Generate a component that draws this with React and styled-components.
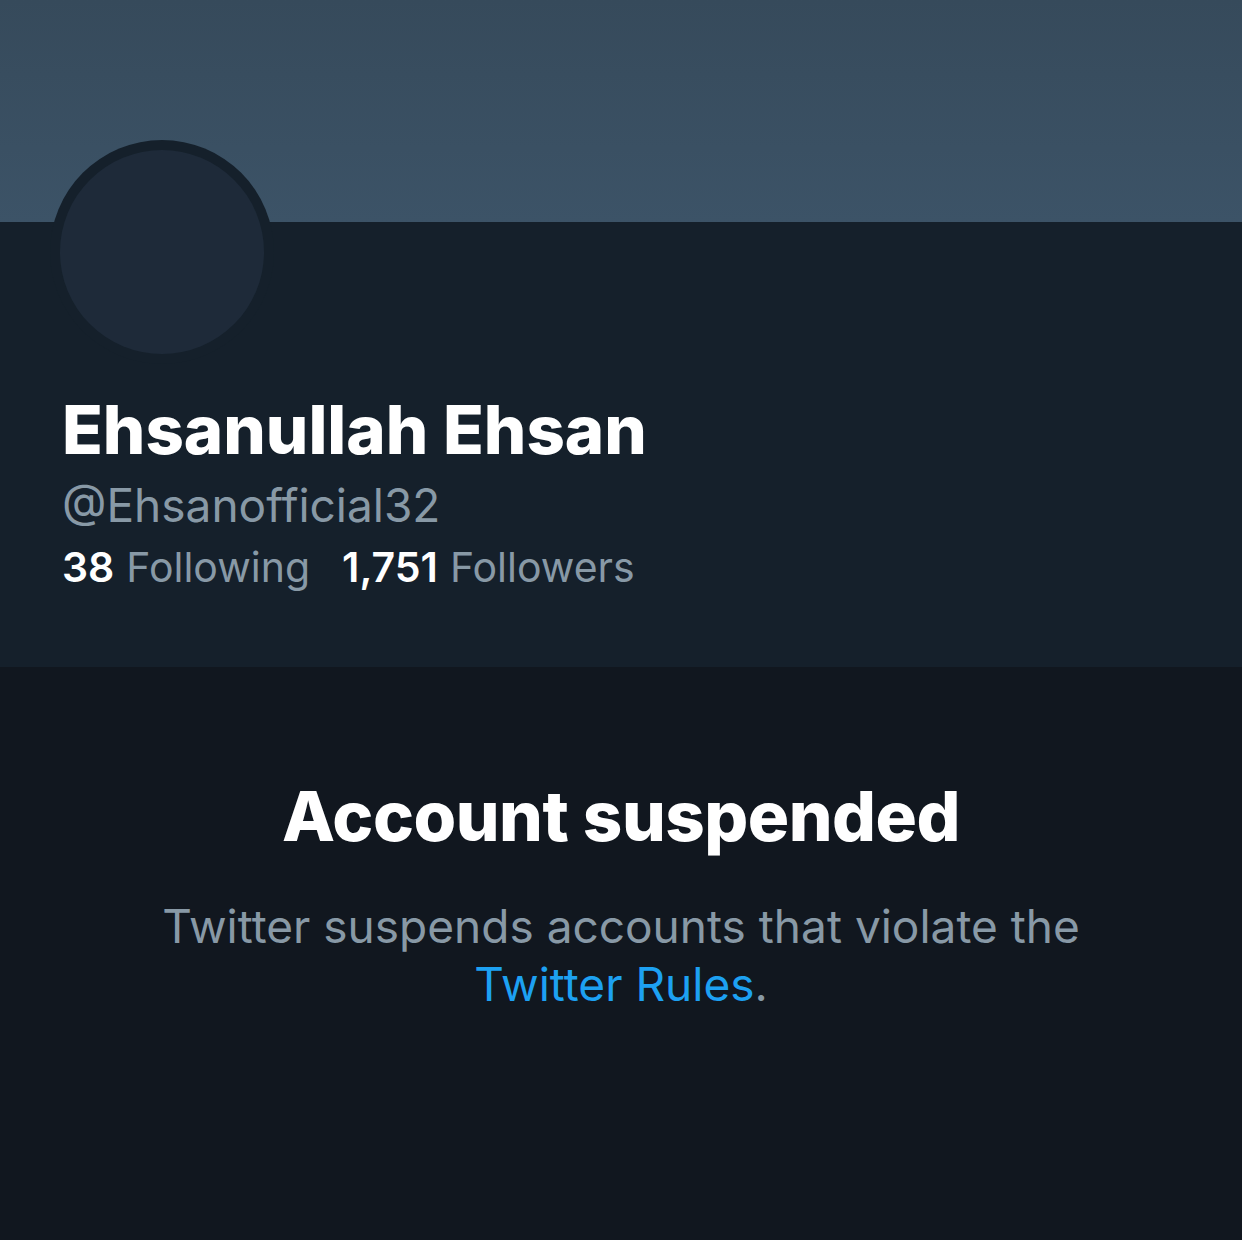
import React from "react";
import styled, { createGlobalStyle } from "styled-components";

const GlobalStyle = createGlobalStyle`
  html, body {
    margin: 0;
    padding: 0;
    background: #11171f;
  }
  body {
    font-family: Inter, "Noto Sans", "Liberation Sans", sans-serif;
    -webkit-font-smoothing: antialiased;
  }
`;

const Page = styled.div`
  width: 1242px;
  height: 1240px;
  background: #11171f;
  display: flex;
  flex-direction: column;
  overflow: hidden;
`;

const Banner = styled.div`
  height: 222px;
  background: linear-gradient(180deg, #364a5b 0%, #3c5367 100%);
  flex-shrink: 0;
`;

const Profile = styled.section`
  background: #15202b;
  height: 445px;
  padding: 0 62px;
  box-sizing: border-box;
  display: flex;
  flex-direction: column;
`;

const AvatarRing = styled.div`
  width: 224px;
  height: 224px;
  margin: -82px 0 0 -12px;
  border-radius: 50%;
  background: #15202b;
  display: flex;
  align-items: center;
  justify-content: center;
`;

const Avatar = styled.div`
  width: 204px;
  height: 204px;
  border-radius: 50%;
  background: #1e2a39;
`;

const Name = styled.h1`
  margin: 24px 0 0;
  color: #ffffff;
  font-size: 67px;
  font-weight: 800;
  line-height: 84px;
`;

const Handle = styled.div`
  margin-top: 5px;
  color: #8899a6;
  font-size: 46px;
  line-height: 56px;
`;

const Stats = styled.div`
  display: flex;
  gap: 32px;
  margin-top: 8px;
  font-size: 41px;
  line-height: 52px;
`;

const Stat = styled.span`
  color: #8899a6;
  b {
    color: #ffffff;
    font-weight: 600;
    margin-right: 12px;
  }
`;

const Notice = styled.section`
  flex: 1;
  display: flex;
  flex-direction: column;
  align-items: center;
  text-align: center;
  padding-top: 106px;
`;

const Heading = styled.h2`
  margin: 0;
  color: #ffffff;
  font-size: 69px;
  font-weight: 800;
  line-height: 86px;
  letter-spacing: -0.5px;
`;

const Body = styled.p`
  margin: 38px 0 0;
  width: 960px;
  color: #8899a6;
  font-size: 46px;
  line-height: 58px;
  a {
    color: #1da1f2;
    text-decoration: none;
  }
`;

export default function App() {
  return (
    <Page>
      <GlobalStyle />
      <Banner />
      <Profile>
        <AvatarRing>
          <Avatar />
        </AvatarRing>
        <Name>Ehsanullah Ehsan</Name>
        <Handle>@Ehsanofficial32</Handle>
        <Stats>
          <Stat>
            <b>38</b>Following
          </Stat>
          <Stat>
            <b>1,751</b>Followers
          </Stat>
        </Stats>
      </Profile>
      <Notice>
        <Heading>Account suspended</Heading>
        <Body>
          Twitter suspends accounts that violate the{" "}
          <a href="#rules">Twitter Rules</a>.
        </Body>
      </Notice>
    </Page>
  );
}
